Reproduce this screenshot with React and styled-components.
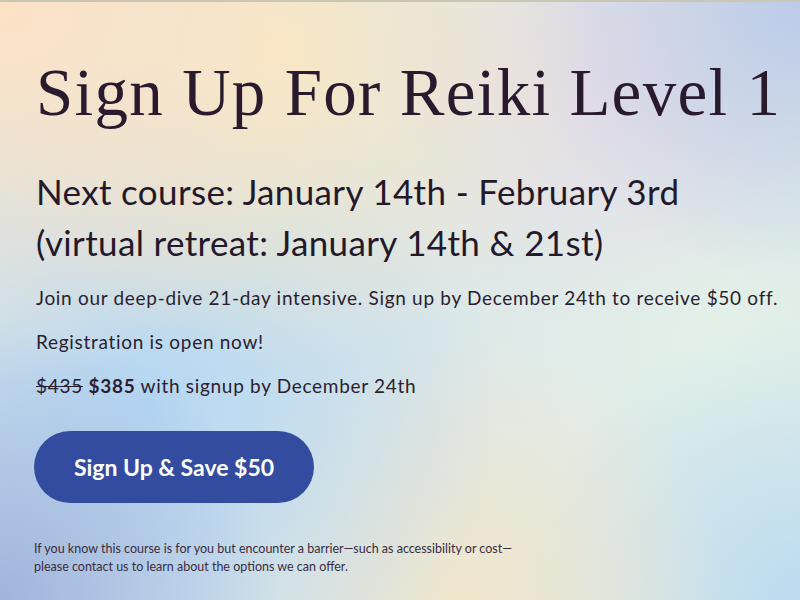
import React from 'react'
import styled, { createGlobalStyle } from 'styled-components'

const GlobalStyle = createGlobalStyle`
  html, body {
    margin: 0;
    padding: 0;
  }
  body {
    font-family: Lato, "Open Sans", sans-serif;
    color: #2b1e2f;
  }
`

const Page = styled.main`
  box-sizing: border-box;
  min-height: 600px;
  padding: 50px 20px 0 36px;
  border-top: 2px solid #c9c6b4;
  background-color: #dde7e8;
  background-image:
    radial-gradient(circle at 0% 0%, #fde2c5 0%, rgba(253, 226, 197, 0) 38%),
    radial-gradient(circle at 35% 8%, #f7e7c5 0%, rgba(247, 231, 197, 0) 42%),
    radial-gradient(circle at 100% 0%, #bccbe8 0%, rgba(188, 203, 232, 0) 28%),
    radial-gradient(circle at 75% 12%, #e6dde6 0%, rgba(230, 221, 230, 0) 32%),
    radial-gradient(circle at 0% 100%, #9fb4dd 0%, rgba(159, 180, 221, 0) 28%),
    radial-gradient(circle at 18% 68%, #b4d7f3 0%, rgba(180, 215, 243, 0) 46%),
    radial-gradient(circle at 58% 100%, #f1e6cc 0%, rgba(241, 230, 204, 0) 35%),
    radial-gradient(circle at 100% 100%, #bcdcf0 0%, rgba(188, 220, 240, 0) 28%),
    radial-gradient(circle at 90% 58%, #e3f1e8 0%, rgba(227, 241, 232, 0) 40%);
`

const Title = styled.h1`
  margin: 0 0 34px 0;
  font-family: "Liberation Serif", "Times New Roman", serif;
  font-weight: 400;
  font-size: 67px;
  line-height: 80px;
  letter-spacing: 1.3px;
  color: #2a1a2e;
  white-space: nowrap;
`

const Subtitle = styled.h2`
  margin: 0 0 18px 0;
  font-weight: 400;
  font-size: 35px;
  line-height: 51px;
  letter-spacing: 0.35px;
  color: #24192a;
  white-space: nowrap;
`

const Text = styled.p`
  margin: 0 0 20px 0;
  font-size: 19px;
  line-height: 24px;
  letter-spacing: 0.7px;
  color: #2b1e2f;
  white-space: nowrap;
`

const Old = styled.s`
  text-decoration-thickness: 1px;
`

const Strong = styled.strong`
  font-weight: 700;
`

const Button = styled.button`
  display: flex;
  align-items: center;
  justify-content: center;
  width: 280px;
  height: 72px;
  margin: 33px 0 37px -2px;
  padding: 0;
  border: none;
  border-radius: 36px;
  background: #334c9f;
  color: #ffffff;
  font-family: Lato, sans-serif;
  font-weight: 700;
  font-size: 23px;
  cursor: pointer;
`

const Note = styled.p`
  margin: 0 0 0 -2px;
  max-width: 490px;
  font-size: 12.5px;
  line-height: 18px;
  color: #3a2d3f;
`

export default function App() {
  return (
    <>
      <GlobalStyle />
      <Page>
        <Title>Sign Up For Reiki Level 1</Title>
        <Subtitle>
          Next course: January 14th - February 3rd
          <br />
          (virtual retreat: January 14th &amp; 21st)
        </Subtitle>
        <Text>
          Join our deep-dive 21-day intensive. Sign up by December 24th to receive $50 off.
        </Text>
        <Text>Registration is open now!</Text>
        <Text>
          <Old>$435</Old> <Strong>$385</Strong> with signup by December 24th
        </Text>
        <Button>Sign Up &amp; Save $50</Button>
        <Note>
          If you know this course is for you but encounter a barrier—such as accessibility or cost—
          please contact us to learn about the options we can offer.
        </Note>
      </Page>
    </>
  )
}
